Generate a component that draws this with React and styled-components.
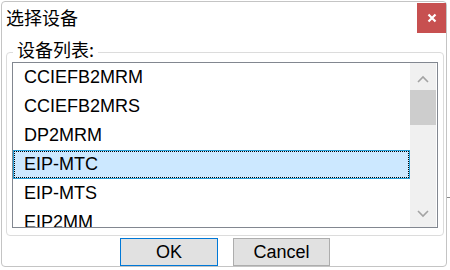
import React from "react";
import styled, { createGlobalStyle } from "styled-components";

const Global = createGlobalStyle`
  html, body { margin: 0; padding: 0; background: #fff; }
  body { width: 450px; height: 270px; overflow: hidden; }
`;

const CJK = `"Noto Sans CJK SC", "Microsoft YaHei", sans-serif`;
const UI = `"Liberation Sans", Arial, sans-serif`;

const Stage = styled.div`
  width: 450px;
  height: 270px;
  box-sizing: border-box;
  padding: 1px 0 0 1px;
  background-color: #fff;
  background-image: linear-gradient(#8a8a8a, #8a8a8a);
  background-size: 4px 1px;
  background-position: 447px 197px;
  background-repeat: no-repeat;
`;

const Window = styled.div`
  width: 446px;
  height: 266px;
  box-sizing: border-box;
  border: 1px solid #c4c4c4;
  border-radius: 4px;
  background: #fff;
  display: flex;
  flex-direction: column;
`;

const TitleBar = styled.div`
  height: 31px;
  display: flex;
  align-items: flex-start;
  justify-content: space-between;
`;

const Title = styled.div`
  padding-left: 4px;
  height: 31px;
  line-height: 31px;
  font-family: ${CJK};
  font-size: 18px;
  color: #000;
`;

const CloseButton = styled.div`
  margin-top: 1px;
  width: 29px;
  height: 30px;
  background: #c75050;
  display: flex;
  align-items: center;
  justify-content: center;
`;

const Group = styled.fieldset`
  margin: 9px 2px 0 4px;
  padding: 0 5px 7px 5px;
  border: 1px solid #dcdcdc;
  border-radius: 4px;
  min-width: 0;
`;

const Legend = styled.legend`
  margin-left: 1px;
  padding: 0 4px 6px 4px;
  height: 20px;
  box-sizing: border-box;
  line-height: 14px;
  font-family: ${CJK};
  font-size: 18px;
  color: #000;
`;

const ListBox = styled.div`
  height: 166px;
  box-sizing: border-box;
  border: 1px solid #828790;
  display: flex;
  background: #fff;
`;

const Items = styled.div`
  flex: 1;
  overflow: hidden;
`;

const Row = styled.div`
  height: 29px;
  box-sizing: border-box;
  display: flex;
  align-items: center;
  padding-left: 10px;
  font-family: ${UI};
  font-size: 18px;
  color: #000;
  border: 1px solid ${(p) => (p.$selected ? "#26a0da" : "transparent")};
  background: ${(p) => (p.$selected ? "#cce8ff" : "transparent")};
  outline: ${(p) => (p.$selected ? "1px dotted #000" : "none")};
  outline-offset: -2px;
`;

const ScrollBar = styled.div`
  width: 26px;
  margin-right: 1px;
  background: #f0f0f0;
  display: flex;
  flex-direction: column;
`;

const ArrowButton = styled.div`
  height: ${(p) => (p.$up ? 27 : 26)}px;
  box-sizing: border-box;
  padding-top: ${(p) => (p.$up ? 4 : 0)}px;
  display: flex;
  align-items: center;
  justify-content: center;
`;

const Thumb = styled.div`
  height: 35px;
  background: #cdcdcd;
`;

const Track = styled.div`
  flex: 1;
`;

const ButtonRow = styled.div`
  margin-top: 2px;
  display: flex;
  justify-content: center;
  gap: 15px;
  padding-left: 2px;
`;

const Button = styled.div`
  width: ${(p) => p.$w}px;
  height: 28px;
  box-sizing: border-box;
  border: 1px solid ${(p) => (p.$default ? "#0078d7" : "#adadad")};
  background: #e1e1e1;
  display: flex;
  align-items: center;
  justify-content: center;
  font-family: ${UI};
  font-size: 18px;
  color: #000;
`;

const Chevron = ({ up }) => (
  <svg width="12" height="8" viewBox="0 0 12 8">
    <polyline
      points={up ? "1,7 6,2 11,7" : "1,1 6,6 11,1"}
      fill="none"
      stroke="#a3a3a3"
      strokeWidth="1.6"
    />
  </svg>
);

const items = ["CCIEFB2MRM", "CCIEFB2MRS", "DP2MRM", "EIP-MTC", "EIP-MTS", "EIP2MM"];

export default function App() {
  return (
    <>
      <Global />
      <Stage>
        <Window>
          <TitleBar>
            <Title>选择设备</Title>
            <CloseButton>
              <svg width="10" height="10" viewBox="0 0 10 10">
                <path d="M1.5 1.5 L8.5 8.5 M8.5 1.5 L1.5 8.5" stroke="#fff" strokeWidth="2.2" />
              </svg>
            </CloseButton>
          </TitleBar>
          <Group>
            <Legend>设备列表:</Legend>
            <ListBox>
              <Items>
                {items.map((it) => (
                  <Row key={it} $selected={it === "EIP-MTC"}>
                    {it}
                  </Row>
                ))}
              </Items>
              <ScrollBar>
                <ArrowButton $up>
                  <Chevron up />
                </ArrowButton>
                <Thumb />
                <Track />
                <ArrowButton>
                  <Chevron />
                </ArrowButton>
              </ScrollBar>
            </ListBox>
          </Group>
          <ButtonRow>
            <Button $default $w={98}>OK</Button>
            <Button $w={97}>Cancel</Button>
          </ButtonRow>
        </Window>
      </Stage>
    </>
  );
}
